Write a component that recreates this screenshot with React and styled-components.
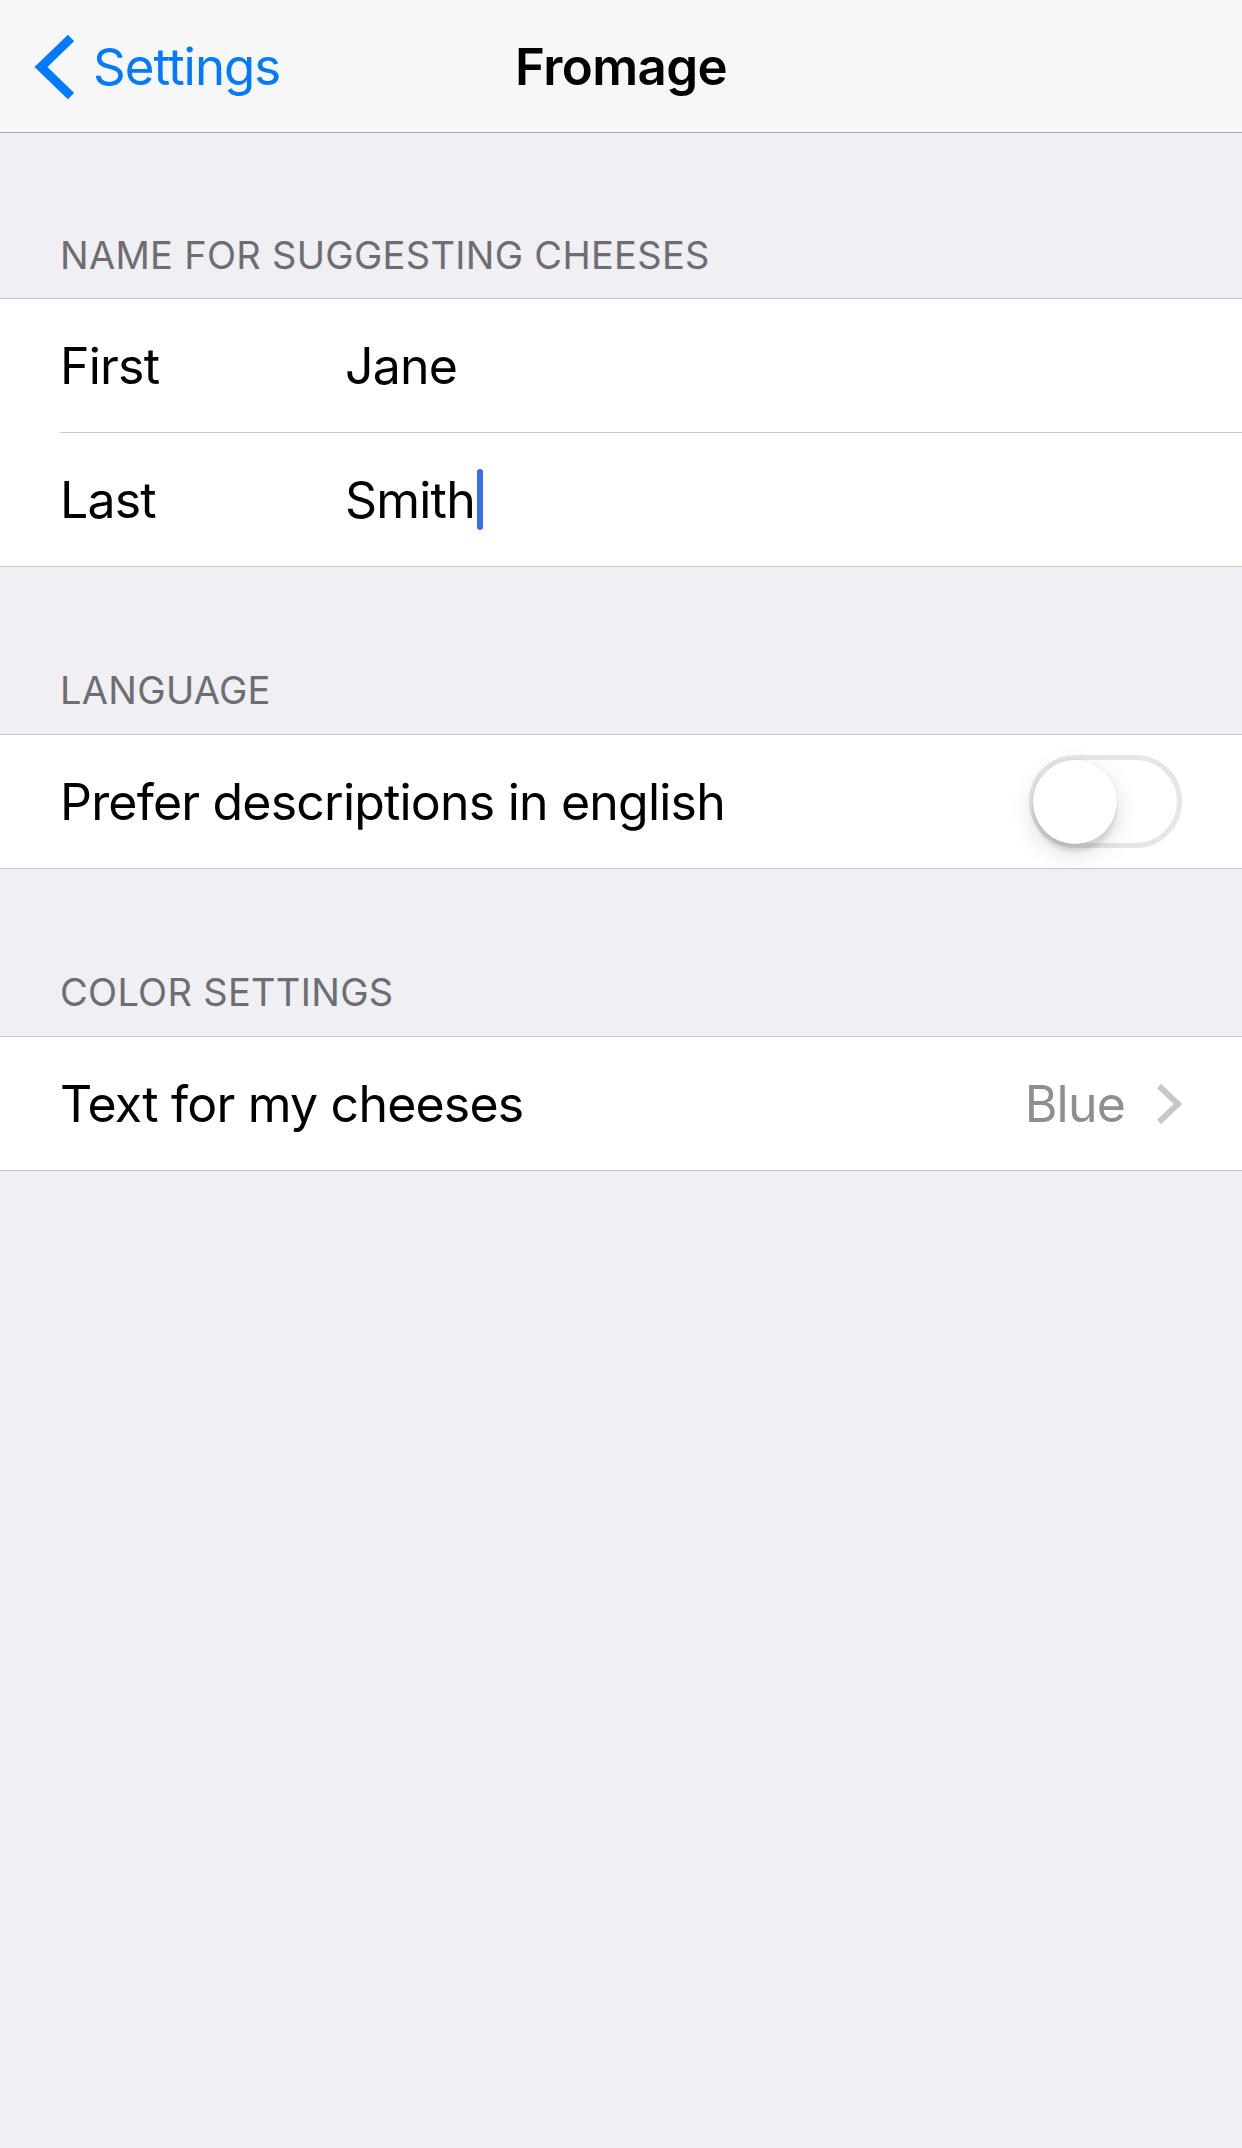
import styled, { createGlobalStyle } from "styled-components";

const GlobalStyle = createGlobalStyle`
  html, body {
    margin: 0;
    padding: 0;
    background-color: #efeff4;
  }
  body {
    font-family: "Inter", "Liberation Sans", sans-serif;
    -webkit-font-smoothing: antialiased;
  }
`;

const Screen = styled.div`
  min-height: 100vh;
  background-color: #efeff4;
  display: flex;
  flex-direction: column;
`;

const NavBar = styled.header`
  height: 132px;
  background-color: #f7f7f7;
  border-bottom: 1px solid #a9a9ac;
  display: grid;
  grid-template-columns: 1fr auto 1fr;
  align-items: center;
`;

const BackButton = styled.button`
  justify-self: start;
  display: flex;
  align-items: center;
  gap: 19px;
  padding: 0 0 0 34px;
  margin: 0;
  border: none;
  background: transparent;
  color: #007aff;
  font-family: inherit;
  font-size: 51px;
  letter-spacing: -1px;
  cursor: pointer;

  svg {
    display: block;
    margin-top: 2px;
  }
`;

const Title = styled.h1`
  margin: 0;
  font-size: 51px;
  font-weight: 600;
  letter-spacing: -0.6px;
  color: #000;
`;

const SectionHeader = styled.div`
  height: ${(props) => (props.first ? 165 : 167)}px;
  box-sizing: border-box;
  display: flex;
  align-items: flex-end;
  padding: 0 60px ${(props) => (props.first ? 24 : 25)}px;
  font-size: 38px;
  line-height: 38px;
  letter-spacing: 0.3px;
  color: #6d6d72;
  text-transform: uppercase;
`;

const Group = styled.div`
  background-color: #fff;
  border-top: 1px solid #c8c7cc;
  border-bottom: 1px solid #c8c7cc;
`;

const Row = styled.div`
  height: 133px;
  display: flex;
  align-items: center;
  padding: 0 60px;
  font-size: 50px;
  letter-spacing: -0.8px;
  color: #000;

  & + & {
    border-top: 1px solid #c8c7cc;
    margin-left: 60px;
    padding-left: 0;
  }
`;

const Label = styled.span`
  width: ${(props) => (props.fixed ? "285px" : "auto")};
  flex: ${(props) => (props.fixed ? "none" : "1")};
`;

const FieldValue = styled.span`
  display: flex;
  align-items: center;
`;

const Caret = styled.span`
  display: inline-block;
  width: 6px;
  height: 61px;
  border-radius: 3px;
  background-color: #3c6cf0;
  margin-left: 2px;
`;

const Detail = styled.span`
  color: #8e8e93;
  margin-right: 31px;
`;

const Switch = styled.span`
  position: relative;
  width: 153px;
  height: 93px;
  box-sizing: border-box;
  border: 5px solid #e5e5ea;
  border-radius: 47px;
  background-color: #fff;
`;

const Knob = styled.span`
  position: absolute;
  left: -1px;
  top: 0;
  width: 84px;
  height: 84px;
  border-radius: 50%;
  background-color: #fff;
  box-shadow: 0 9px 24px rgba(0, 0, 0, 0.15), 0 8px 3px rgba(0, 0, 0, 0.08),
    0 0 0 1px rgba(0, 0, 0, 0.03);
`;

function BackChevron() {
  return (
    <svg width="40" height="64" viewBox="0 0 40 64">
      <polyline
        points="37,3 7,32 37,61"
        fill="none"
        stroke="#007aff"
        strokeWidth="9"
        strokeLinecap="butt"
        strokeLinejoin="miter"
      />
    </svg>
  );
}

function Disclosure() {
  return (
    <svg width="26" height="42" viewBox="0 0 26 42">
      <polyline
        points="3,3 22,21 3,39"
        fill="none"
        stroke="#c7c7cc"
        strokeWidth="6"
      />
    </svg>
  );
}

export default function App() {
  return (
    <Screen>
      <GlobalStyle />
      <NavBar>
        <BackButton>
          <BackChevron />
          Settings
        </BackButton>
        <Title>Fromage</Title>
        <span />
      </NavBar>

      <SectionHeader first>Name for suggesting cheeses</SectionHeader>
      <Group>
        <Row>
          <Label fixed>First</Label>
          <FieldValue>Jane</FieldValue>
        </Row>
        <Row>
          <Label fixed>Last</Label>
          <FieldValue>
            Smith
            <Caret />
          </FieldValue>
        </Row>
      </Group>

      <SectionHeader>Language</SectionHeader>
      <Group>
        <Row>
          <Label>Prefer descriptions in english</Label>
          <Switch>
            <Knob />
          </Switch>
        </Row>
      </Group>

      <SectionHeader>Color settings</SectionHeader>
      <Group>
        <Row>
          <Label>Text for my cheeses</Label>
          <Detail>Blue</Detail>
          <Disclosure />
        </Row>
      </Group>
    </Screen>
  );
}
